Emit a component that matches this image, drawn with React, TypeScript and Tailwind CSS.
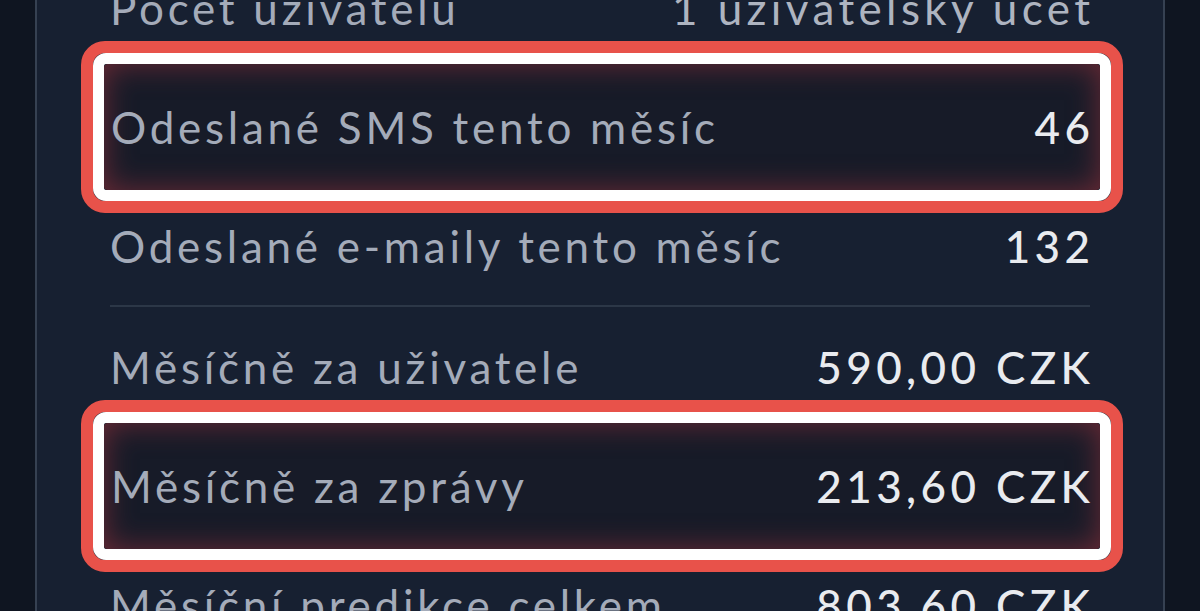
import React from "react";

type Row = { label: string; value: string; highlight?: boolean; muted?: boolean };

const topRows: Row[] = [
  { label: "Počet uživatelů", value: "1 uživatelský účet", muted: true },
  { label: "Odeslané SMS tento měsíc", value: "46", highlight: true },
  { label: "Odeslané e-maily tento měsíc", value: "132" },
];

const bottomRows: Row[] = [
  { label: "Měsíčně za uživatele", value: "590,00 CZK" },
  { label: "Měsíčně za zprávy", value: "213,60 CZK", highlight: true },
  { label: "Měsíční predikce celkem", value: "803,60 CZK" },
];

function RowContent({ row }: { row: Row }) {
  return (
    <>
      <span className="text-[#a4abb9]">{row.label}</span>
      <span
        className={
          row.muted
            ? "-mr-[0.1em] tracking-[0.1em] text-[#aeb4c0]"
            : "-mr-[0.1em] font-medium tracking-[0.1em] text-[#e9ebef]"
        }
      >
        {row.value}
      </span>
    </>
  );
}

function SummaryRow({ row }: { row: Row }) {
  if (row.highlight) {
    return (
      <div className="-mt-[26px] -mb-[27px] -ml-[29px] -mr-[33px] h-[172px] shrink-0 rounded-[24px] border-[12px] border-[#e8524a]">
        <div className="h-full rounded-[13px] border-[11px] border-white">
          <div className="flex h-full items-center justify-between rounded-[4px] bg-[#171b28] pl-[7px] pr-[10px] shadow-[inset_0_0_30px_rgba(125,45,55,0.85)]">
            <RowContent row={row} />
          </div>
        </div>
      </div>
    );
  }
  return (
    <div className="flex h-[119px] shrink-0 items-center justify-between">
      <RowContent row={row} />
    </div>
  );
}

export default function App() {
  return (
    <div
      className="h-[611px] w-[1200px] overflow-hidden bg-[#0f1521]"
      style={{ fontFamily: "Lato, 'Noto Sans', sans-serif" }}
    >
      <div className="mx-[35px] flex h-full flex-col border-x-2 border-[#364152] bg-[#172031] px-[73px]">
        <div className="-mt-[52px] flex flex-col text-[44px] leading-none tracking-[0.085em]">
          {topRows.map((row) => (
            <SummaryRow key={row.label} row={row} />
          ))}
          <div className="h-[2px] shrink-0 bg-[#2c3747]" />
          {bottomRows.map((row) => (
            <SummaryRow key={row.label} row={row} />
          ))}
        </div>
      </div>
    </div>
  );
}
